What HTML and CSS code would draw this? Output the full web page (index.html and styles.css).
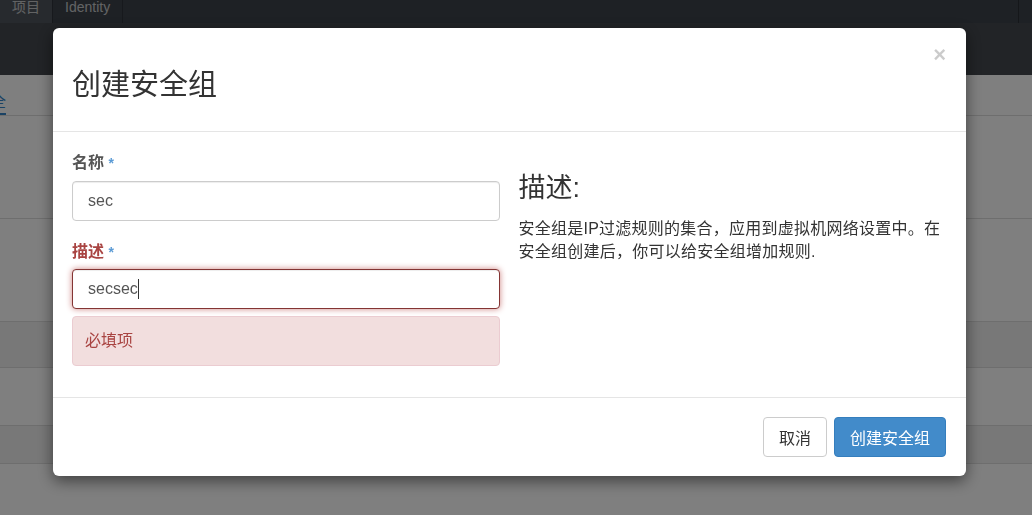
FILE: index.html
```html
<!DOCTYPE html>
<html lang="zh-CN">
<head>
    <meta charset="UTF-8">
    <meta name="viewport" content="width=device-width, initial-scale=1.0">
    <title>创建安全组</title>
    <link rel="stylesheet" href="styles.css">
</head>
<body>
    <div class="topbar">
        <span class="nav-tab active">项目</span>
        <span class="nav-tab">Identity</span>
        <span class="nav-fill"></span>
        <span class="nav-end"></span>
    </div>
    <div class="subbar"></div>

    <div class="page">
        <div class="page-tabs">
            <a class="page-tab" href="#">安全</a>
        </div>
        <div class="block block-tall"></div>
        <div class="block block-tall"></div>
        <div class="table-row head"></div>
        <div class="table-row"></div>
        <div class="table-row odd"></div>
        <div class="table-row"></div>
    </div>

    <div class="backdrop">
        <div class="modal">
            <div class="modal-header">
                <span class="close">&times;</span>
                <h3 class="modal-title">创建安全组</h3>
            </div>

            <div class="modal-body">
                <div class="left">
                    <div class="form-group">
                        <label for="name">名称 <span class="req">*</span></label>
                        <input type="text" id="name" value="sec">
                    </div>
                    <div class="form-group has-error">
                        <label for="desc">描述 <span class="req">*</span></label>
                        <div class="input-wrap">
                            <input type="text" id="desc" value="secsec">
                            <span class="caret"></span>
                        </div>
                        <div class="alert">必填项</div>
                    </div>
                </div>
                <div class="right">
                    <h3>描述:</h3>
                    <p>安全组是IP过滤规则的集合，应用到虚拟机网络设置中。在安全组创建后，你可以给安全组增加规则.</p>
                </div>
            </div>

            <div class="modal-footer">
                <button class="btn">取消</button>
                <button class="btn btn-primary">创建安全组</button>
            </div>
        </div>
    </div>
</body>
</html>
```

FILE: styles.css
```css
body {
    margin: 0;
    font-family: 'Liberation Sans', 'Noto Sans CJK SC', sans-serif;
    font-size: 16px;
    color: #333;
    background: #fff;
    overflow: hidden;
}

/* page behind the dialog */
.topbar {
    height: 23px;
    background: #3c424a;
    display: flex;
}

.nav-tab {
    color: #fff;
    font-size: 14px;
    line-height: 15px;
    padding: 0 12px;
    border-right: 1px solid #2a2e34;
    opacity: 0.7;
}

.nav-tab.active {
    background: #585e66;
}

.nav-fill {
    flex: 1;
}

.nav-end {
    width: 13px;
    border-left: 1px solid #2a2e34;
}

.subbar {
    height: 52px;
    background: #44484e;
}

.page-tabs {
    height: 40px;
    border-bottom: 1px solid #ddd;
    display: flex;
    align-items: flex-end;
}

.page-tab {
    margin-left: -26px;
    color: #3584c8;
    font-size: 16px;
    line-height: 22px;
    text-decoration: none;
    border-bottom: 2px solid #3584c8;
}

.block {
    border-bottom: 1px solid #ddd;
}

.block-tall {
    height: 102px;
}

.table-row {
    height: 57px;
    border-bottom: 1px solid #ddd;
}

.table-row.head {
    height: 45px;
    background: #f0f0f0;
}

.table-row.odd {
    height: 37px;
    background: #f0f0f0;
}

/* dialog */
.backdrop {
    position: fixed;
    inset: 0;
    background: rgba(0, 0, 0, 0.5);
}

.modal {
    width: 913px;
    margin: 28px 0 0 53px;
    background: #fff;
    border-radius: 6px;
    box-shadow: 0 5px 15px rgba(0, 0, 0, 0.5);
    position: relative;
}

.modal-header {
    padding: 39px 19px 28px;
    border-bottom: 1px solid #e5e5e5;
}

.modal-title {
    margin: 0;
    font-size: 29px;
    line-height: 36px;
    font-weight: normal;
    color: #333;
}

.close {
    position: absolute;
    top: 16px;
    right: 20px;
    font-size: 22px;
    line-height: 22px;
    font-weight: bold;
    color: #000;
    opacity: 0.2;
}

.modal-body {
    padding: 20px 20px 31px 19px;
    display: grid;
    grid-template-columns: 1fr 1fr;
    column-gap: 19px;
}

.form-group {
    margin-bottom: 20px;
}

.form-group:last-child {
    margin-bottom: 0;
}

label {
    display: block;
    font-weight: bold;
    line-height: 22px;
    margin-bottom: 7px;
    color: #555;
}

.req {
    color: #5b9bd5;
    font-size: 14px;
    vertical-align: top;
}

input {
    width: 100%;
    height: 40px;
    box-sizing: border-box;
    padding: 0 15px;
    border: 1px solid #ccc;
    border-radius: 4px;
    font-family: 'Liberation Sans', 'Noto Sans CJK SC', sans-serif;
    font-size: 16px;
    color: #555;
    box-shadow: inset 0 1px 1px rgba(0, 0, 0, 0.075);
}

.has-error label {
    color: #a94442;
    margin-bottom: 6px;
}

.has-error input {
    border-color: #843534;
    box-shadow: inset 0 1px 1px rgba(0, 0, 0, 0.075), 0 0 6px #ce8483;
}

.input-wrap {
    position: relative;
}

.caret {
    position: absolute;
    left: 66px;
    top: 10px;
    width: 1px;
    height: 20px;
    background: #333;
}

.alert {
    margin-top: 7px;
    padding: 13px 12px;
    line-height: 22px;
    background: #f2dede;
    border: 1px solid #ebccd1;
    border-radius: 4px;
    color: #a94442;
}

.right h3 {
    margin: 21px 0 14px;
    font-size: 27px;
    line-height: 30px;
    font-weight: normal;
}

.right p {
    margin: 0;
    line-height: 23px;
    font-size: 16px;
    letter-spacing: 0.25px;
}

.modal-footer {
    padding: 19px 20px 19px;
    border-top: 1px solid #e5e5e5;
    display: flex;
    justify-content: flex-end;
    gap: 7px;
}

.btn {
    height: 40px;
    padding: 0 15px;
    font-family: 'Liberation Sans', 'Noto Sans CJK SC', sans-serif;
    font-size: 16px;
    color: #333;
    background: #fff;
    border: 1px solid #ccc;
    border-radius: 4px;
}

.btn-primary {
    color: #fff;
    background: #428bca;
    border-color: #357ebd;
}
```
